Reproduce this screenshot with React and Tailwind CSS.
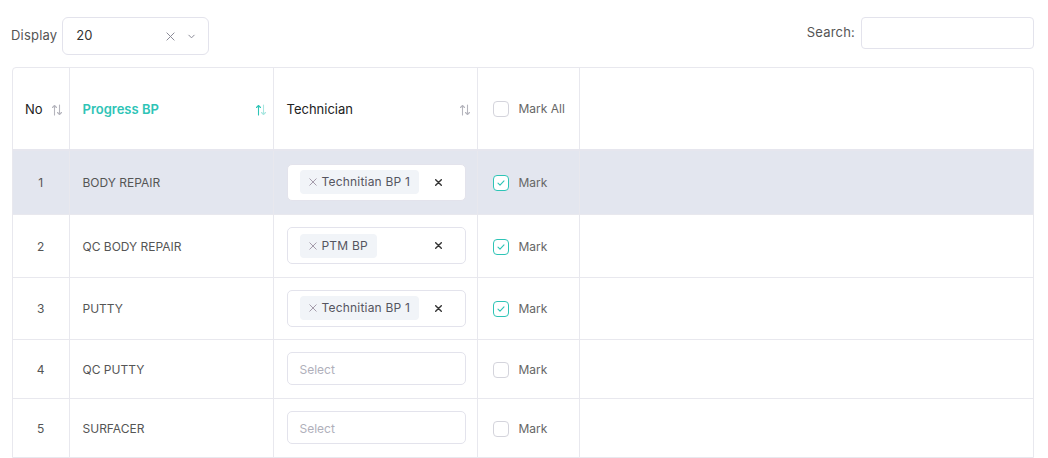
import React, { useState } from 'react';

const ROWS = [
  { no: 1, name: 'BODY REPAIR', techs: ['Technitian BP 1'], marked: true, active: true },
  { no: 2, name: 'QC BODY REPAIR', techs: ['PTM BP'], marked: true },
  { no: 3, name: 'PUTTY', techs: ['Technitian BP 1'], marked: true },
  { no: 4, name: 'QC PUTTY', techs: [], marked: false },
  { no: 5, name: 'SURFACER', techs: [], marked: false },
];

const rowHeights = ['h-[64px]', 'h-[63px]', 'h-[62px]', 'h-[59px]', 'h-[59px]'];

const SortIcon = ({ active }) => (
  <svg width="12" height="12" viewBox="0 0 12 12" fill="none" strokeWidth="1.1" strokeLinecap="round" strokeLinejoin="round">
    <g stroke={active ? '#2ec4b6' : '#b5b5bd'}>
      <path d="M3.5 11V1.5M1.5 3.5l2-2 2 2" />
    </g>
    <g stroke={active ? '#a9e6e0' : '#b5b5bd'}>
      <path d="M8.5 1V10.5M6.5 8.5l2 2 2-2" />
    </g>
  </svg>
);

const XIcon = ({ size = 9, color = '#8a8a96', width = 1.1 }) => (
  <svg width={size} height={size} viewBox="0 0 10 10" fill="none">
    <path d="M1 1l8 8M9 1l-8 8" stroke={color} strokeWidth={width} strokeLinecap="round" />
  </svg>
);

const Checkbox = ({ checked }) => (
  <span
    className={`flex h-4 w-4 items-center justify-center rounded-[4px] border bg-white ${checked ? 'border-[#2ec4b6]' : 'border-[#d4d4dc]'}`}
  >
    {checked && (
      <svg width="10" height="10" viewBox="0 0 10 10" fill="none">
        <path d="M2 5.2l2 2 4-4.4" stroke="#2ec4b6" strokeWidth="1.1" strokeLinecap="round" strokeLinejoin="round" />
      </svg>
    )}
  </span>
);

const TechSelect = ({ techs }) => {
  if (techs.length === 0) {
    return (
      <div className="flex h-[33px] w-[179px] items-center rounded-[5px] border border-[#e3e3ec] bg-white px-3 pt-[3px] text-[12px] text-[#b0b0bb]">
        Select
      </div>
    );
  }
  return (
    <div className="flex h-[37px] w-[179px] items-center rounded-[5px] border border-[#e3e3ec] bg-white pl-3 pr-[23px]">
      <div className="flex flex-1 gap-1">
        {techs.map((t) => (
          <span key={t} className="flex h-[24px] items-center gap-[5px] rounded-[4px] bg-[#f1f4f8] pl-[9px] pr-[9px] text-[12px] tracking-[0.2px] text-[#555560]">
            <XIcon size={8} color="#9a8f9f" />
            {t}
          </span>
        ))}
      </div>
      <XIcon size={7} color="#333" width={2} />
    </div>
  );
};

const App = () => {
  const [display] = useState('20');
  return (
    <div className="h-[458px] w-[1048px] bg-white font-['Inter','Liberation_Sans',sans-serif] text-[#444]">
      <div className="flex items-start justify-between px-3 pt-[17px]">
        <div className="flex items-center gap-[5px] -ml-[1px]">
          <span className="text-[13px] tracking-[0.2px] text-[#555]">Display</span>
          <div className="flex h-[38px] w-[147px] items-center rounded-[6px] border border-[#e3e3ec] pl-[13px] pr-3">
            <span className="flex-1 text-[13px] text-[#333]">{display}</span>
            <span className="mr-[12px]">
              <XIcon size={9} />
            </span>
            <svg width="9" height="9" viewBox="0 0 10 10" fill="none">
              <path d="M2 3.5l3 3 3-3" stroke="#8a8a96" strokeWidth="1.1" strokeLinecap="round" />
            </svg>
          </div>
        </div>
        <div className="mr-[2px] flex items-center gap-[6px]">
          <span className="text-[13px] tracking-[0.2px] text-[#555]">Search:</span>
          <div className="h-[32px] w-[173px] rounded-[4px] border border-[#e3e3ec]" />
        </div>
      </div>

      <div className="mt-[12px] ml-3 w-[1022px] overflow-hidden rounded-t-[4px] border border-[#e8e8ee]">
        <table className="w-full table-fixed border-collapse">
          <colgroup>
            <col className="w-[56px]" />
            <col className="w-[204px]" />
            <col className="w-[204px]" />
            <col className="w-[102px]" />
            <col />
          </colgroup>
          <thead>
            <tr className="h-[82px] border-b-2 border-[#e6e6ee]">
              <th className="border-r border-[#e8e8ee] pl-3 pr-[6px] pt-[3px] text-left text-[13px] font-normal text-[#222]">
                <div className="flex items-center justify-between">
                  No <SortIcon />
                </div>
              </th>
              <th className="border-r border-[#e8e8ee] pl-[13px] pr-[6px] pt-[3px] text-left text-[13px] font-semibold text-[#2ec4b6]">
                <div className="flex items-center justify-between">
                  Progress BP <SortIcon active />
                </div>
              </th>
              <th className="border-r border-[#e8e8ee] pl-[13px] pr-[6px] pt-[3px] text-left text-[13px] font-normal text-[#222]">
                <div className="flex items-center justify-between">
                  Technician <SortIcon />
                </div>
              </th>
              <th className="border-r border-[#e8e8ee] pl-[15px] pt-[1px] text-left text-[12px] font-normal text-[#666]">
                <div className="flex items-center gap-[10px]">
                  <Checkbox /> Mark All
                </div>
              </th>
              <th />
            </tr>
          </thead>
          <tbody>
            {ROWS.map((r, i) => (
              <tr
                key={r.no}
                className={`${rowHeights[i]} border-b border-[#e8e8ee] text-[12px] text-[#555] last:border-b-0 ${r.active ? 'bg-[#e3e6ef]' : ''}`}
              >
                <td className="border-r border-[#e8e8ee] pt-[2px] text-center">{r.no}</td>
                <td className="border-r border-[#e8e8ee] pl-[13px] pt-[2px]">{r.name}</td>
                <td className="border-r border-[#e8e8ee] pl-[13px]">
                  <TechSelect techs={r.techs} />
                </td>
                <td className="border-r border-[#e8e8ee] pl-[15px] pt-[2px]">
                  <div className="flex items-center gap-[10px] text-[#666]">
                    <Checkbox checked={r.marked} /> Mark
                  </div>
                </td>
                <td />
              </tr>
            ))}
          </tbody>
        </table>
      </div>
    </div>
  );
};

export default App;
